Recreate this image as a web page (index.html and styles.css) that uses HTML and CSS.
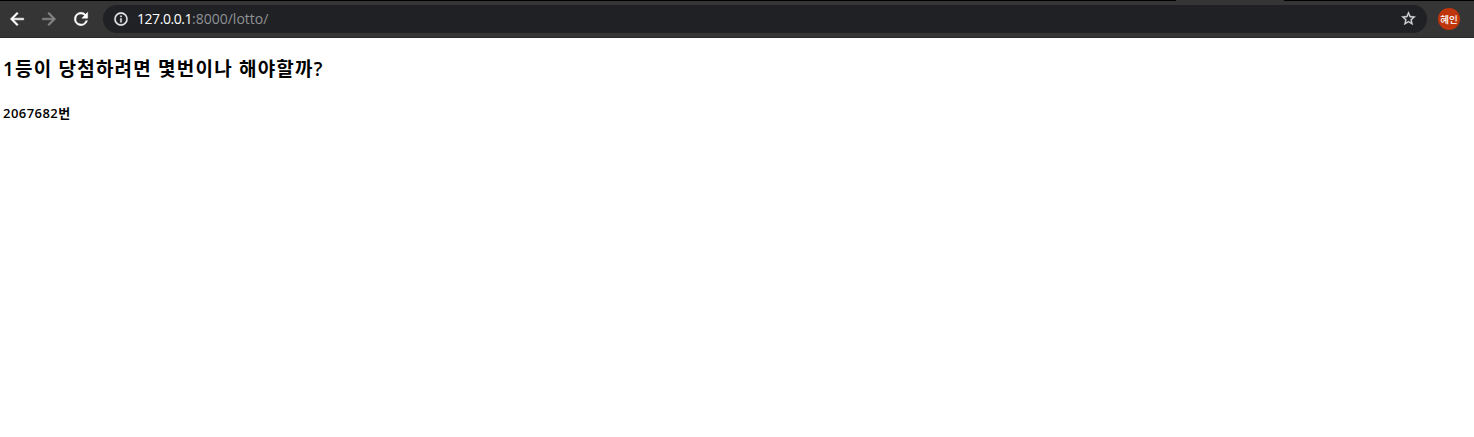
FILE: index.html
```html
<!DOCTYPE html>
<html lang="ko">
<head>
<meta charset="utf-8">
<title>lotto</title>
<link rel="stylesheet" href="styles.css">
</head>
<body>
<div class="tabstrip"><div class="active-tab"></div></div>
<header class="toolbar">
  <nav class="nav">
    <svg class="icon" viewBox="0 0 24 24"><path d="M20 11H7.83l5.59-5.59L12 4l-8 8 8 8 1.41-1.41L7.83 13H20z"/></svg>
    <svg class="icon icon-off" viewBox="0 0 24 24"><path d="M12 4l-1.41 1.41L16.17 11H4v2h12.17l-5.58 5.59L12 20l8-8z"/></svg>
    <svg class="icon" viewBox="0 0 24 24"><path d="M17.65 6.35A7.96 7.96 0 0 0 12 4a8 8 0 1 0 7.73 10h-2.08A6 6 0 1 1 12 6c1.66 0 3.14.69 4.22 1.78L13 11h7V4z"/></svg>
  </nav>
  <div class="address">
    <svg class="info" viewBox="0 0 24 24"><path d="M11 17h2v-6h-2zm0-8h2V7h-2zm1-7a10 10 0 1 0 0 20 10 10 0 0 0 0-20zm0 18a8 8 0 1 1 0-16 8 8 0 0 1 0 16z"/></svg>
    <span class="url"><span class="host">127.0.0.1</span>:8000/lotto/</span>
    <svg class="star" viewBox="0 0 24 24"><path d="M22 9.24l-7.19-.62L12 2 9.19 8.63 2 9.24l5.46 4.73L5.82 21 12 17.27 18.18 21l-1.63-7.03zM12 15.4l-3.76 2.27 1-4.28-3.32-2.88 4.38-.38L12 6.1l1.71 4.04 4.38.38-3.32 2.88 1 4.28z"/></svg>
  </div>
  <span class="avatar">혜인</span>
</header>
<main class="page">
  <h1 class="question">1등이 당첨하려면 몇번이나 해야할까?</h1>
  <p class="answer">2067682번</p>
</main>
</body>
</html>
```
FILE: styles.css
```css
body { margin: 0; background: #fff; }
.tabstrip { display: flex; height: 1px; background: #000; }
.active-tab { width: 108px; margin-left: 1176px; background: #353535; }
.toolbar { display: flex; align-items: center; box-sizing: border-box; height: 37px; padding-bottom: 1px; background: #353535; border-bottom: 1px solid #2a2a2a; }
.nav { display: flex; gap: 12px; padding-left: 7px; }
.icon { width: 20px; height: 20px; fill: #fff; stroke: #fff; stroke-width: .6; }
.icon-off { fill: #868686; stroke: #868686; }
.address { display: flex; align-items: center; box-sizing: border-box; width: 1324px; height: 28px; margin-left: 12px; padding: 0 10px; border-radius: 14px; background: #202124; }
.info { width: 16px; height: 16px; fill: #e8eaed; stroke: #e8eaed; stroke-width: .5; }
.url { flex: 1; margin-left: 8px; font: 14px "Open Sans", "Noto Sans", sans-serif; color: #8f9296; }
.host { color: #fff; letter-spacing: -.45px; }
.star { width: 17px; height: 17px; fill: #d5d7da; stroke: #d5d7da; stroke-width: .4; }
.avatar { width: 22px; height: 22px; margin-left: 11px; border-radius: 50%; background: #bf360c; color: #fff; font: 500 9.5px/22px "Noto Sans CJK KR", sans-serif; text-align: center; }
.page { padding: 16px 3px; font-family: "Open Sans", "Noto Sans CJK KR", sans-serif; font-weight: 600; color: #000; }
.question { margin: 0; font-size: 19px; font-weight: 600; line-height: 31px; letter-spacing: 1.2px; }
.answer { margin: 18px 0 0; font-size: 13px; line-height: 20px; letter-spacing: .45px; }
```
